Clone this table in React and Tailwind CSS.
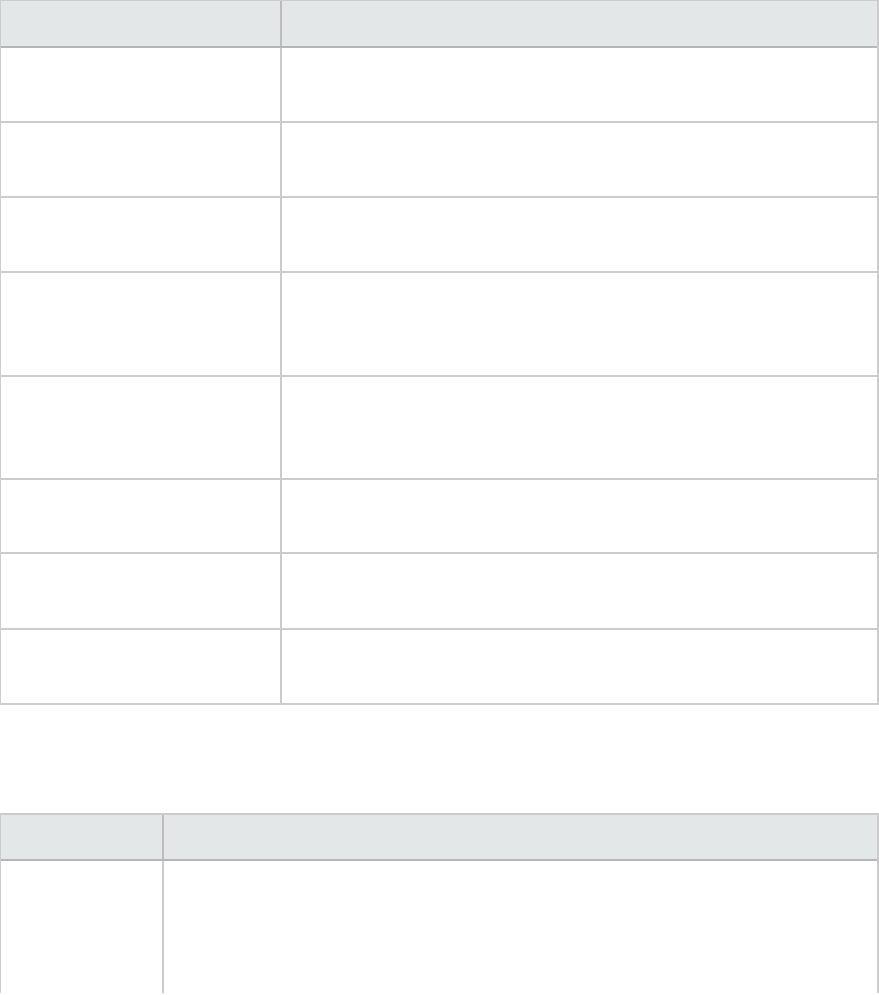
import React from 'react';

const FIRST_ROWS = [75, 75, 75, 104, 103, 74, 76, 75];

function HeaderRow({ firstWidth, height }) {
  return (
    <div className={`flex ${height} bg-[#e3e7e8] border-b-2 border-[#b6b6b6]`}>
      <div className={`${firstWidth} border-r-2 border-[#bcbcbc]`} />
      <div className="flex-1" />
    </div>
  );
}

export default function App() {
  return (
    <div className="w-[879px] h-[995px] bg-white font-['Liberation_Sans',sans-serif] overflow-hidden">
      {/* first table */}
      <div className="border-t border-l border-r-2 border-[#cccccc]">
        <HeaderRow firstWidth="w-[281px]" height="h-[47px]" />
        {FIRST_ROWS.map((h, i) => (
          <div key={i} className="flex border-b-2 border-[#cccccc]" style={{ height: h }}>
            <div className="w-[281px] border-r-2 border-[#cccccc]" />
            <div className="flex-1" />
          </div>
        ))}
      </div>

      {/* second table */}
      <div className="mt-[108px] border-t-2 border-l border-r-2 border-[#cccccc]">
        <HeaderRow firstWidth="w-[163px]" height="h-[46px]" />
        <div className="flex h-[132px]">
          <div className="w-[163px] border-r-2 border-[#cccccc]" />
          <div className="flex-1" />
        </div>
      </div>
    </div>
  );
}
